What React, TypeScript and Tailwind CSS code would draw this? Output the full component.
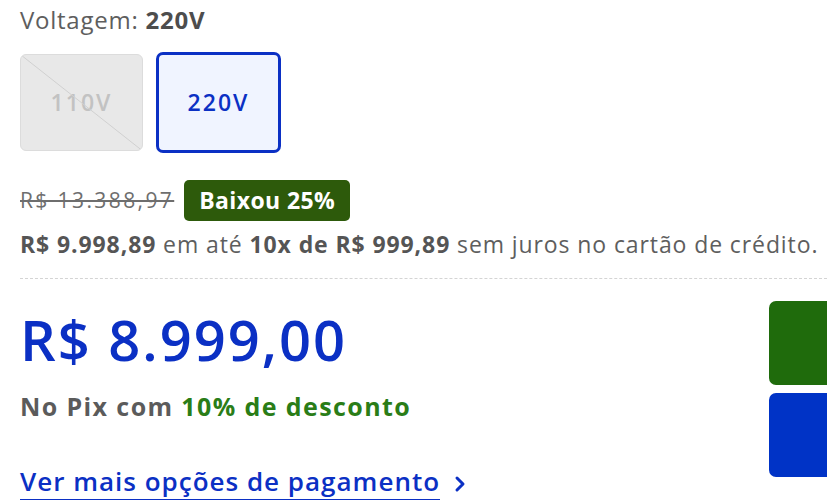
import { ChevronRight } from "lucide-react";

export default function App() {
  return (
    <div className="w-[827px] h-[500px] overflow-hidden bg-white font-['Open_Sans',sans-serif] text-[#5e5e5e]">
      <div className="pl-[20px]">
        {/* voltagem */}
        <div className="h-[36px] pt-[4px] text-[24px] leading-[32px] tracking-[0.75px]">
          Voltagem: <span className="font-bold text-[#4d4d4d]">220V</span>
        </div>
        <div className="mt-[16px] flex gap-[13px] items-center h-[101px]">
          <div className="relative w-[123px] h-[97px] rounded-[6px] border border-[#dcdcdc] bg-[#e8e8e8] overflow-hidden flex items-center justify-center">
            <span className="text-[23px] tracking-[2px] text-[#c2c2c2] font-semibold">110V</span>
            <svg className="absolute inset-0" width="123" height="97" viewBox="0 0 123 97" preserveAspectRatio="none">
              <line x1="0" y1="0" x2="123" y2="97" stroke="#d0d0d0" strokeWidth="1" />
            </svg>
          </div>
          <div className="w-[125px] h-[101px] rounded-[7px] border-[3px] border-[#0b30c4] bg-[#f0f4ff] flex items-center justify-center">
            <span className="text-[23px] tracking-[2px] text-[#0b30c4] font-semibold">220V</span>
          </div>
        </div>

        {/* precos */}
        <div className="flex items-center gap-[10px] h-[41px] mt-[27px]">
          <span className="text-[21px] tracking-[2.4px] line-through decoration-[1.5px] text-[#6e6e6e]">R$ 13.388,97</span>
          <span className="h-[41px] w-[166px] rounded-[5px] bg-[#2d5a0b] text-white font-bold text-[23px] tracking-[0.4px] flex items-center justify-center">
            Baixou 25%
          </span>
        </div>
        <div className="mt-[8px] text-[23px] leading-[30px] tracking-[0.9px] whitespace-nowrap">
          <span className="font-bold text-[#555]">R$ 9.998,89</span> em até{" "}
          <span className="font-bold text-[#555]">10x de R$ 999,89</span> sem juros no cartão de crédito.
        </div>
        <div className="mt-[19px] border-t border-dashed border-[#d4d4d4]" />

        <div className="flex justify-between mt-[22px]">
          <div className="flex flex-col pt-[6px]">
            <div className="text-[56px] leading-[64px] font-semibold text-[#0b30c4] tracking-[2px] whitespace-nowrap">R$ 8.999,00</div>
            <div className="mt-[19px] text-[25px] font-bold text-[#5b5b5b] leading-[32px] tracking-[1.4px] whitespace-nowrap">
              No Pix com <span className="text-[#2a7d17]">10% de desconto</span>
            </div>
            <a className="mt-[44px] flex items-center gap-[8px] text-[#0b30c4] text-[26px] font-semibold leading-[30px] whitespace-nowrap">
              <span className="border-b-[2px] border-[#0b30c4] pb-[3px] tracking-[1px]">Ver mais opções de pagamento</span>
              <ChevronRight size={24} strokeWidth={3} />
            </a>
          </div>
          <div className="flex flex-col gap-[8px] w-[58px] shrink-0">
            <div className="w-[80px] h-[84px] rounded-[7px] bg-[#1f6b0c]" />
            <div className="w-[80px] h-[84px] rounded-[7px] bg-[#0033c6]" />
          </div>
        </div>
      </div>
    </div>
  );
}
